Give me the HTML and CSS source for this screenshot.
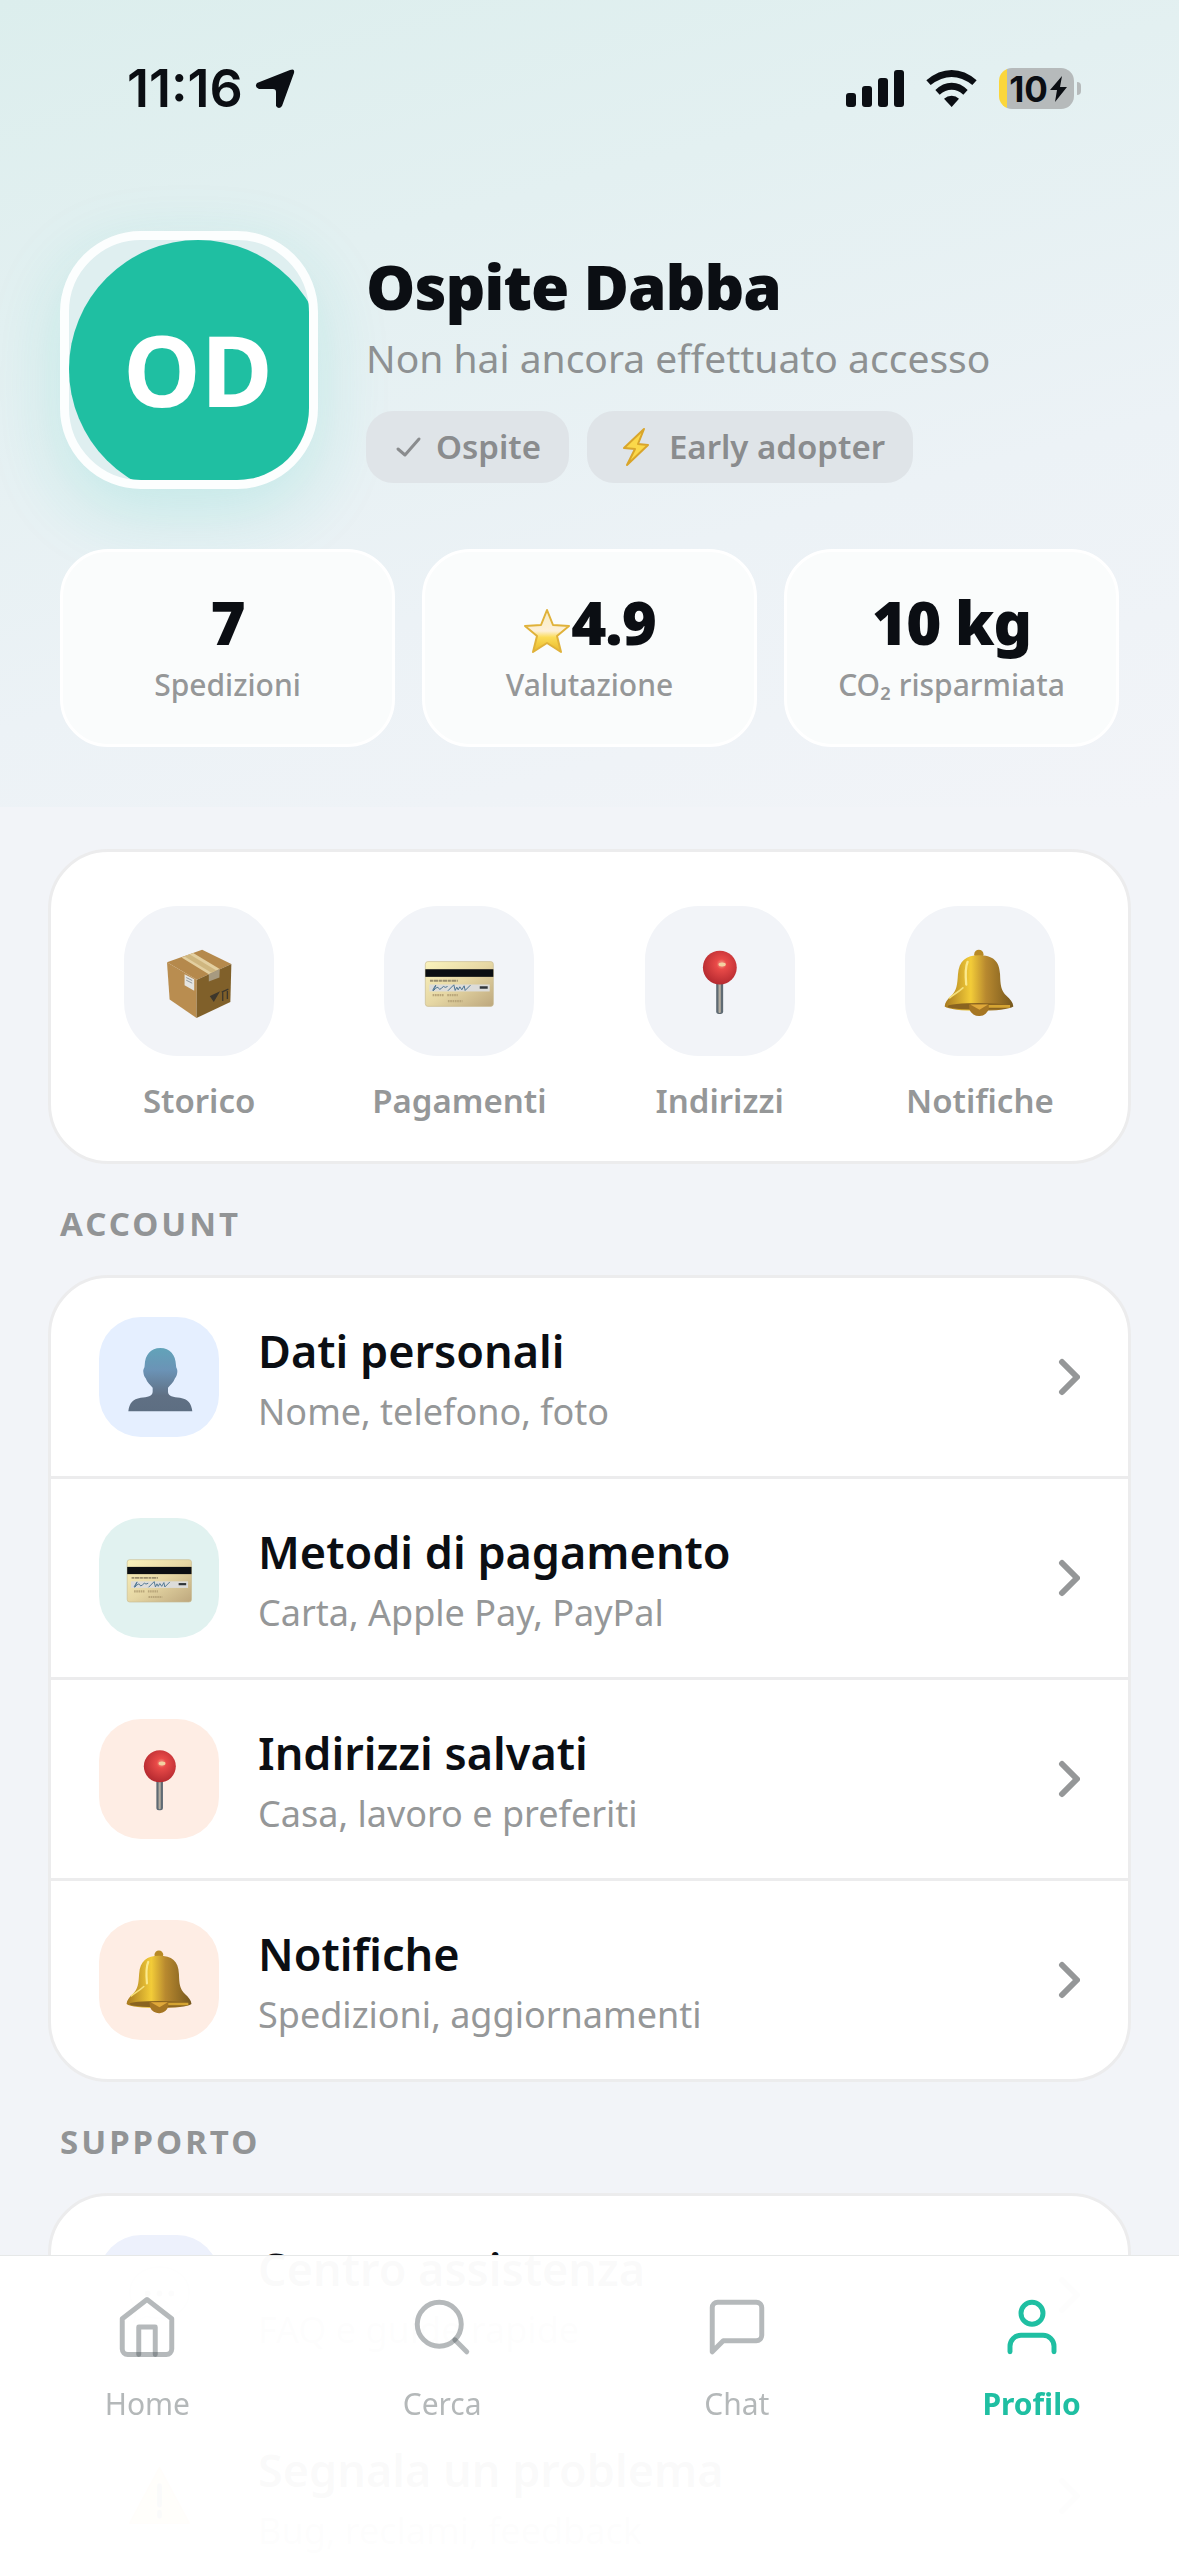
FILE: index.html
```html
<!DOCTYPE html>
<html lang="it">
<head>
  <meta charset="UTF-8" />
  <meta name="viewport" content="width=device-width, initial-scale=1.0" />
  <title>Profilo</title>
  <link rel="stylesheet" href="styles.css">
</head>
<body>

  <!-- Shared icons -->
  <svg class="sprite" aria-hidden="true">
    <defs>
      <linearGradient id="gGold" x1="0" x2="1" y1="0" y2="0">
        <stop offset="0" stop-color="#a87a20" />
        <stop offset=".38" stop-color="#f3cc38" />
        <stop offset=".6" stop-color="#b8892f" />
        <stop offset="1" stop-color="#76571d" />
      </linearGradient>
      <linearGradient id="gCard" x1="0" x2="1" y1="0" y2="1">
        <stop offset="0" stop-color="#fbf3bd" />
        <stop offset=".5" stop-color="#e6d7a4" />
        <stop offset="1" stop-color="#bda77d" />
      </linearGradient>
      <radialGradient id="gPin" cx=".55" cy=".4" r=".6">
        <stop offset="0" stop-color="#f6a58c" />
        <stop offset=".25" stop-color="#e94a48" />
        <stop offset="1" stop-color="#b52a30" />
      </radialGradient>
      <linearGradient id="gPerson" x1="0" x2="0" y1="0" y2="1">
        <stop offset="0" stop-color="#62a3b9" />
        <stop offset=".35" stop-color="#6b93b6" />
        <stop offset=".75" stop-color="#607084" />
        <stop offset="1" stop-color="#5d6e82" />
      </linearGradient>
      <linearGradient id="gStar" x1="0" x2="0" y1="0" y2="1">
        <stop offset="0" stop-color="#f7ecc0" />
        <stop offset=".5" stop-color="#fdf0d8" />
        <stop offset=".65" stop-color="#fbdc58" />
        <stop offset="1" stop-color="#e9b827" />
      </linearGradient>
    </defs>

    <symbol id="box" viewBox="187 193 220 220">
      <path d="M199 245 305 207 393 250 289 298z" fill="#b5894c" />
      <path d="M199 245 289 298 288 413 207 357z" fill="#b98d50" />
      <path d="M289 298 393 250 390 365 288 413z" fill="#80602a" />
      <path d="M243 231 278 217 358 265 325 281z" fill="#e3cfa0" />
      <path d="M252 228 268 222 348 270 333 277z" fill="#cfb67f" />
      <path d="M325 281 358 265 357 291 325 303z" fill="#a79a80" />
      <path d="M252 281 281 296 281 331 252 314z" fill="#e4e4e0" />
      <path d="M257 291 275 300M257 299 275 308" stroke="#8f979c" stroke-width="3" />
      <path d="M331 348 354 337 340 361zM367 334V362M381 328V356M364 335 384 326" stroke="#3d372c" stroke-width="4" fill="#3d372c" />
    </symbol>

    <symbol id="card" viewBox="967 193 220 220">
      <rect x="974" y="243" width="205" height="135" rx="8" fill="url(#gCard)" stroke="#c9bb92" stroke-width="2" />
      <rect x="974" y="266" width="205" height="23" fill="#0b0e12" />
      <path d="M988 301H1072" stroke="#9a8f70" stroke-width="6" stroke-dasharray="9 2 14 2" />
      <rect x="986" y="312" width="182" height="21" fill="#dcdcda" />
      <path d="M996 330q12-22 9-14t-7 15q14-16 16-8t9 0 8-4 10-1M1042 331l18-18 4 17 5-10 4 8 5-9 6 9 7-12 3 14 16-16" fill="none" stroke="#4b7390" stroke-width="3" />
      <path d="M1138 321H1162" stroke="#32363a" stroke-width="7" />
      <path d="M996 344H1030M1040 344H1072M1042 362H1086" stroke="#b9a67a" stroke-width="7" stroke-dasharray="5 2" />
    </symbol>

    <symbol id="pin" viewBox="187 193 220 220">
      <rect x="287" y="300" width="21" height="101" rx="8" fill="#5f6a73" />
      <rect x="294" y="308" width="7" height="90" rx="3" fill="#b3aca0" />
      <circle cx="298" cy="261" r="51" fill="url(#gPin)" />
      <ellipse cx="305" cy="252" rx="11" ry="6" fill="#f3d2a0" />
    </symbol>

    <symbol id="bell" viewBox="970 193 220 220">
      <circle cx="1078" cy="221" r="14" fill="#b88a26" />
      <path d="M1078 224C1120 224 1140 240 1142 282C1143 312 1144 330 1162 347C1173 357 1181 366 1182 378C1170 386 1130 391 1078 391S986 386 975 378C976 366 983 357 994 347C1012 330 1013 312 1015 282C1018 240 1040 224 1078 224z" fill="url(#gGold)" />
      <path d="M990 352C1004 340 1015 336 1030 322" fill="none" stroke="#f5e07a" stroke-width="5" stroke-linecap="round" />
      <ellipse cx="1078" cy="378" rx="94" ry="10" fill="#8a6420" />
      <path d="M1084 378H1172" stroke="#d5a432" stroke-width="8" />
      <path d="M1048 372H1108V384A30 28 0 0 1 1050 388z" fill="#a67623" />
      <path d="M1052 372H1106L1080 388z" fill="#e0a93a" />
      <path d="M1044 244C1036 262 1038 290 1040 312" fill="none" stroke="#fbe98c" stroke-width="7" stroke-linecap="round" />
    </symbol>

    <symbol id="person" viewBox="133 128 207 207">
      <path d="M239 143C268 143 285 163 286 195C286 205 291 205 290 215C289 226 286 229 283 234C278 247 270 254 262 262V274C262 287 278 290 298 292C322 296 332 308 335 333H143C146 308 156 296 180 292C200 290 216 287 216 274V262C208 254 200 247 195 234C192 229 189 226 188 215C187 205 192 205 192 195C193 163 210 143 239 143z" fill="url(#gPerson)" />
    </symbol>

    <symbol id="speech" viewBox="0 0 70 70">
      <path d="M35 6C52 6 65 17 65 32S52 58 35 58C30 58 26 57 22 56L9 62 12 49C8 45 5 39 5 32C5 17 18 6 35 6z" fill="#fff" stroke="#c9ccd2" stroke-width="2" />
      <g fill="#6b6f75"><circle cx="23" cy="33" r="3" /><circle cx="35" cy="33" r="3" /><circle cx="47" cy="33" r="3" /></g>
    </symbol>

    <symbol id="warning" viewBox="0 0 70 70">
      <path d="M35 6 65 62H5z" fill="#fbd23c" stroke="#e5a32c" stroke-width="2" stroke-linejoin="round" />
      <path d="M35 24V44M35 51V55" stroke="#22262a" stroke-width="5" stroke-linecap="round" />
    </symbol>

    <symbol id="chevron" viewBox="0 0 22 40">
      <path d="M4 5 19 20 4 35" fill="none" stroke="currentColor" stroke-width="6" stroke-linecap="round" stroke-linejoin="round" />
    </symbol>
  </svg>

  <main class="page">

    <header class="header">
      <div class="status-bar">
        <div class="status-left">
          <span>11:16</span>
          <svg class="location" viewBox="0 0 40 40"><path d="M35 1Q40-1 39 4L27 37Q24 41 21 37V23Q21 20 18 20H4Q-1 18 2 14z" fill="#0b0e13" /></svg>
        </div>
        <div class="status-right">
          <svg class="signal" viewBox="0 0 58 37" fill="#0b0e13">
            <rect x="0" y="23" width="10" height="14" rx="3" />
            <rect x="16" y="16" width="10" height="21" rx="3" />
            <rect x="32" y="8" width="10" height="29" rx="3" />
            <rect x="48" y="0" width="10" height="37" rx="3" />
          </svg>
          <svg class="wifi" viewBox="318 87 153 111" fill="#0b0e13">
            <path d="M319 118Q355 87 395 87T470 118L457 132Q426 108 395 108T332 132z" />
            <path d="M346 147Q368 125 395 125T443 147L430 161Q414 146 395 146T359 161z" />
            <path d="M372 173Q382 164 395 164T417 173L395 198z" />
          </svg>
          <div class="battery">
            <span>10</span>
            <svg class="charge" viewBox="0 0 17 26"><path d="M12 0 0 14H7L5 26 17 11H10z" fill="#0b0e13" /></svg>
          </div>
        </div>
      </div>

      <div class="profile">
        <div class="avatar"><div class="avatar-inner">OD</div></div>
        <div class="profile-info">
          <h1>Ospite Dabba</h1>
          <p>Non hai ancora effettuato accesso</p>
          <div class="badges">
            <span class="badge">
              <svg class="check" viewBox="0 0 30 30"><path d="M4 17 11 23 25 7" fill="none" stroke="#8a8c8e" stroke-width="3" stroke-linecap="round" stroke-linejoin="round" /></svg>
              Ospite
            </span>
            <span class="badge">
              <svg class="bolt" viewBox="0 0 42 42"><path d="M29 3 9 22 20 23 12 39 33 19 23 18z" fill="#fbd84a" stroke="#d9a52b" stroke-width="2" stroke-linejoin="round" /></svg>
              Early adopter
            </span>
          </div>
        </div>
      </div>

      <div class="stats">
        <div class="stat">
          <div class="stat-value">7</div>
          <div class="stat-label">Spedizioni</div>
        </div>
        <div class="stat">
          <div class="stat-value">
            <svg class="star" viewBox="0 0 48 48"><path d="M24 3 30 18 46 19 34 29 38 45 24 36 10 45 14 29 2 19 18 18z" fill="url(#gStar)" stroke="#e0b23a" stroke-width="2" stroke-linejoin="round" /></svg>4.9
          </div>
          <div class="stat-label">Valutazione</div>
        </div>
        <div class="stat">
          <div class="stat-value">10 kg</div>
          <div class="stat-label">CO₂ risparmiata</div>
        </div>
      </div>
    </header>

    <div class="card quick">
      <button class="quick-item"><span class="quick-icon"><svg><use href="#box" /></svg></span>Storico</button>
      <button class="quick-item"><span class="quick-icon"><svg><use href="#card" /></svg></span>Pagamenti</button>
      <button class="quick-item"><span class="quick-icon"><svg><use href="#pin" /></svg></span>Indirizzi</button>
      <button class="quick-item"><span class="quick-icon"><svg><use href="#bell" /></svg></span>Notifiche</button>
    </div>

    <h2>ACCOUNT</h2>
    <div class="card">
      <button class="row">
        <span class="row-icon blue"><svg><use href="#person" /></svg></span>
        <span class="row-text"><span class="row-title">Dati personali</span><span class="row-sub">Nome, telefono, foto</span></span>
        <svg class="chevron"><use href="#chevron" /></svg>
      </button>
      <button class="row">
        <span class="row-icon green"><svg><use href="#card" /></svg></span>
        <span class="row-text"><span class="row-title">Metodi di pagamento</span><span class="row-sub">Carta, Apple Pay, PayPal</span></span>
        <svg class="chevron"><use href="#chevron" /></svg>
      </button>
      <button class="row">
        <span class="row-icon orange"><svg><use href="#pin" /></svg></span>
        <span class="row-text"><span class="row-title">Indirizzi salvati</span><span class="row-sub">Casa, lavoro e preferiti</span></span>
        <svg class="chevron"><use href="#chevron" /></svg>
      </button>
      <button class="row">
        <span class="row-icon orange"><svg><use href="#bell" /></svg></span>
        <span class="row-text"><span class="row-title">Notifiche</span><span class="row-sub">Spedizioni, aggiornamenti</span></span>
        <svg class="chevron"><use href="#chevron" /></svg>
      </button>
    </div>

    <h2>SUPPORTO</h2>
    <div class="card">
      <button class="row">
        <span class="row-icon indigo"><svg><use href="#speech" /></svg></span>
        <span class="row-text"><span class="row-title">Centro assistenza</span><span class="row-sub">FAQ e guide rapide</span></span>
        <svg class="chevron"><use href="#chevron" /></svg>
      </button>
      <button class="row">
        <span class="row-icon yellow"><svg><use href="#warning" /></svg></span>
        <span class="row-text"><span class="row-title">Segnala un problema</span><span class="row-sub">Bug, reclami, feedback</span></span>
        <svg class="chevron"><use href="#chevron" /></svg>
      </button>
    </div>

  </main>

  <nav class="tab-bar">
    <a href="#home" class="tab">
      <svg viewBox="0 0 24 24"><path d="M3 9l9-7 9 7v11a2 2 0 0 1-2 2H5a2 2 0 0 1-2-2z" /><path d="M9 22V12h6v10" /></svg>
      Home
    </a>
    <a href="#cerca" class="tab">
      <svg viewBox="0 0 24 24"><circle cx="11" cy="11" r="8" /><path d="M21 21l-4.35-4.35" /></svg>
      Cerca
    </a>
    <a href="#chat" class="tab">
      <svg viewBox="0 0 24 24"><path d="M21 15a2 2 0 0 1-2 2H7l-4 4V5a2 2 0 0 1 2-2h14a2 2 0 0 1 2 2z" /></svg>
      Chat
    </a>
    <a href="#profilo" class="tab active">
      <svg viewBox="0 0 24 24"><path d="M20 21v-2a4 4 0 0 0-4-4H8a4 4 0 0 0-4 4v2" /><circle cx="12" cy="7" r="4" /></svg>
      Profilo
    </a>
  </nav>

</body>
</html>
```

FILE: styles.css
```css
* {
  box-sizing: border-box;
}
body {
  margin: 0;
  height: 100vh;
  overflow: hidden;
  background: #f2f4f8;
  color: #0b0e13;
  font-family: "Noto Sans", sans-serif;
}
h1, h2, p {
  margin: 0;
}
button {
  border: none;
  background: none;
  font-family: inherit;
  color: inherit;
  cursor: pointer;
}
svg {
  display: block;
  flex-shrink: 0;
}
.sprite {
  position: absolute;
  width: 0;
  height: 0;
}
.page {
  height: 100%;
  overflow-y: auto;
  scrollbar-width: none;
}

/* Header */
.header {
  padding: 0 60px 60px;
  background: linear-gradient(165deg, #dceeed 0%, #e3f0f1 30%, #ecf2f6 65%, #f2f4f8 100%);
}
.status-bar {
  display: flex;
  justify-content: space-between;
  align-items: center;
  padding: 57px 45px 0 67px;
  height: 120px;
  font-family: Inter, sans-serif;
  font-size: 52px;
  font-weight: 600;
}
.status-left, .status-right {
  display: flex;
  align-items: center;
}
.status-left {
  gap: 12px;
}
.status-right {
  gap: 22px;
}
.location {
  width: 40px;
  height: 40px;
}
.signal {
  width: 58px;
  height: 37px;
}
.wifi {
  width: 51px;
  height: 37px;
}
.battery {
  position: relative;
  display: flex;
  align-items: center;
  justify-content: center;
  gap: 2px;
  width: 75px;
  height: 41px;
  padding-left: 3px;
  border-radius: 13px;
  background: linear-gradient(90deg, #fbd63b 8px, #b6babb 8px);
  font-size: 35px;
  font-weight: 700;
}
.battery::after {
  content: "";
  position: absolute;
  right: -7px;
  top: 14px;
  width: 4px;
  height: 13px;
  border-radius: 0 4px 4px 0;
  background: #b6babb;
}
.charge {
  width: 17px;
  height: 26px;
}

.profile {
  display: flex;
  align-items: center;
  gap: 48px;
  margin-top: 111px;
}
.avatar {
  flex-shrink: 0;
  width: 258px;
  height: 258px;
  border: 9px solid #fcfefe;
  border-radius: 81px;
  overflow: hidden;
  background: #dfeff0;
  box-shadow: 0 24px 72px rgba(30, 200, 180, .18);
}
.avatar-inner {
  display: flex;
  align-items: center;
  justify-content: center;
  width: 258px;
  height: 258px;
  border-radius: 50%;
  background: #1fbfa2;
  color: #fff;
  font-size: 98px;
  font-weight: 700;
}
.profile-info {
  padding-top: 8px;
}
.profile-info h1 {
  font-size: 62px;
  font-weight: 900;
  line-height: 80px;
  letter-spacing: -1px;
}
.profile-info p {
  margin-top: 5px;
  font-size: 39px;
  line-height: 53px;
  color: #8e9192;
}
.badges {
  display: flex;
  gap: 18px;
  margin-top: 27px;
}
.badge {
  display: flex;
  align-items: center;
  gap: 12px;
  height: 72px;
  padding: 0 28px;
  border-radius: 27px;
  background: #dfe4e8;
  color: #8a8c8e;
  font-size: 33px;
  font-weight: 600;
}
.check {
  width: 30px;
  height: 30px;
}
.bolt {
  width: 42px;
  height: 42px;
}

.stats {
  display: grid;
  grid-template-columns: repeat(3, 1fr);
  gap: 27px;
  margin-top: 60px;
}
.stat {
  padding: 30px 12px 39px;
  border: 3px solid #fff;
  border-radius: 48px;
  background: #fafcfc;
  text-align: center;
}
.stat-value {
  display: flex;
  align-items: center;
  justify-content: center;
  font-size: 60px;
  font-weight: 900;
  line-height: 80px;
  letter-spacing: -1px;
}
.star {
  width: 48px;
  height: 48px;
  margin-top: 18px;
}
.stat-label {
  margin-top: 2px;
  font-size: 30px;
  font-weight: 500;
  line-height: 41px;
  color: #959798;
}

/* Cards */
.card {
  margin: 0 48px;
  border: 3px solid #ececed;
  border-radius: 60px;
  background: #fff;
  overflow: hidden;
}
.quick {
  display: grid;
  grid-template-columns: repeat(4, 1fr);
  margin-top: 42px;
  padding: 54px 18px 38px;
}
.quick-item {
  display: flex;
  flex-direction: column;
  align-items: center;
  gap: 22px;
  padding: 0;
  font-size: 33px;
  font-weight: 600;
  line-height: 45px;
  color: #959798;
}
.quick-icon {
  display: flex;
  align-items: center;
  justify-content: center;
  width: 150px;
  height: 150px;
  border-radius: 54px;
  background: #f2f4f8;
}
.quick-icon svg {
  width: 73px;
  height: 73px;
}
h2 {
  padding: 37px 60px 29px;
  font-size: 33px;
  font-weight: 700;
  line-height: 45px;
  letter-spacing: 3px;
  color: #929496;
}
.row {
  display: flex;
  align-items: center;
  gap: 39px;
  width: 100%;
  padding: 39px 48px;
  text-align: left;
}
.row + .row {
  border-top: 3px solid #ececed;
}
.row-icon {
  display: flex;
  align-items: center;
  justify-content: center;
  flex-shrink: 0;
  width: 120px;
  height: 120px;
  border-radius: 42px;
}
.row-icon svg {
  width: 69px;
  height: 69px;
}
.blue {
  background: #e5efff;
}
.green {
  background: #e1f2f0;
}
.orange {
  background: #feede4;
}
.indigo {
  background: #edf1fc;
}
.yellow {
  background: #fff8e6;
}
.row-text {
  display: flex;
  flex: 1;
  flex-direction: column;
  gap: 6px;
  padding-top: 2px;
}
.row-title {
  font-size: 45px;
  font-weight: 600;
  line-height: 61px;
}
.row-sub {
  font-size: 36px;
  line-height: 49px;
  color: #959798;
}
.chevron {
  width: 22px;
  height: 40px;
  color: #959798;
}

/* Bottom navigation */
.tab-bar {
  position: fixed;
  left: 0;
  right: 0;
  bottom: 0;
  display: flex;
  padding: 38px 0 132px;
  border-top: 1px solid #e6e8e8;
  background: rgba(255, 255, 255, .98);
}
.tab {
  display: flex;
  flex: 1;
  flex-direction: column;
  align-items: center;
  gap: 23px;
  font-size: 30px;
  line-height: 41px;
  color: #b4b8b9;
  text-decoration: none;
}
.tab svg {
  width: 66px;
  height: 66px;
  fill: none;
  stroke: rgba(70, 80, 84, .4);
  stroke-width: 1.8;
  stroke-linecap: round;
  stroke-linejoin: round;
}
.tab.active {
  font-weight: 700;
  color: #1fbfa2;
}
.tab.active svg {
  stroke: #1fbfa2;
}
```
